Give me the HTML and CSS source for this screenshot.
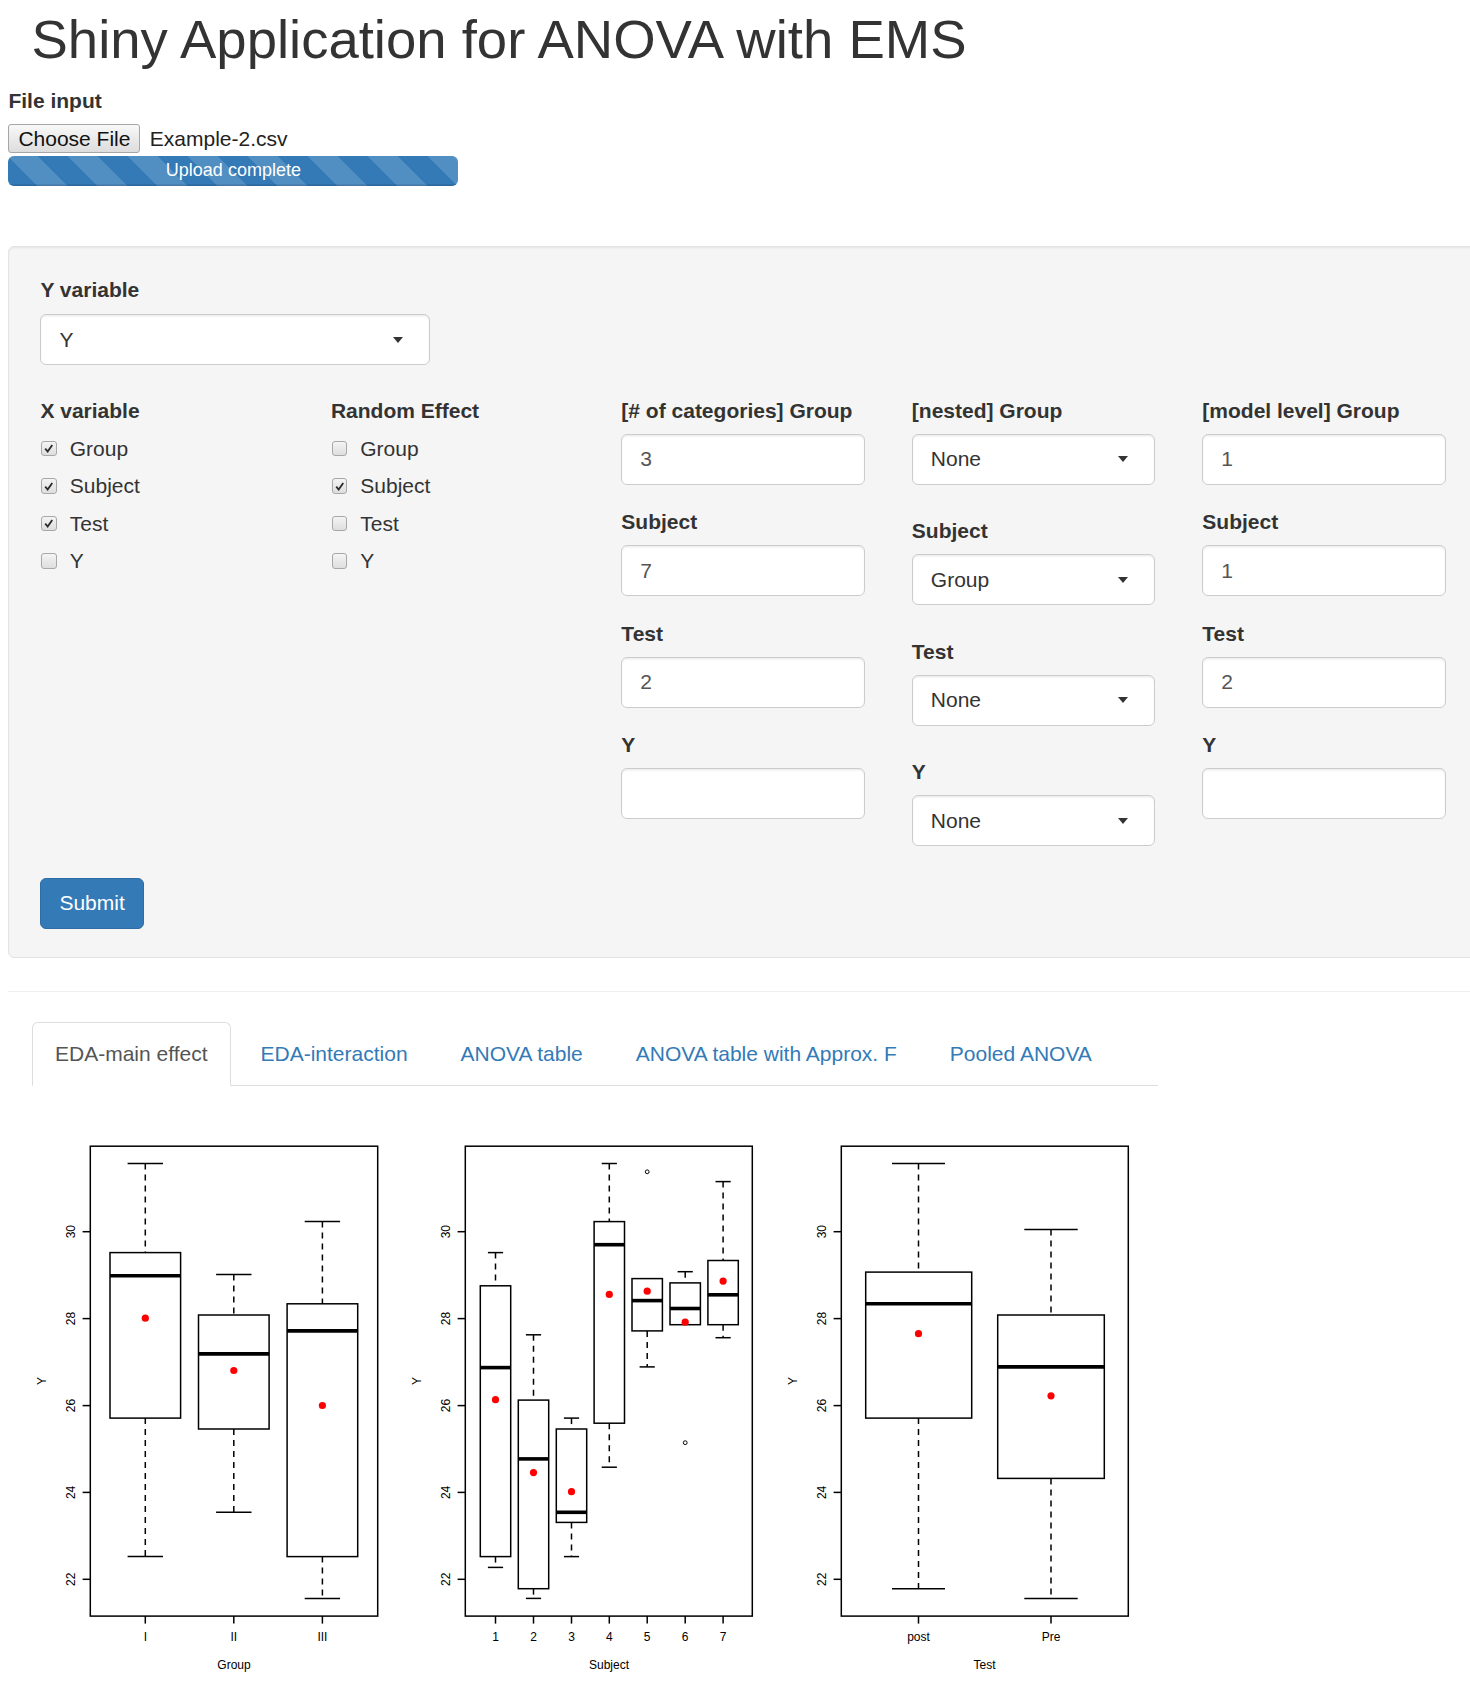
FILE: index.html
```html
<!DOCTYPE html>
<html lang="en">
<head>
<meta charset="utf-8">
<title>Shiny Application for ANOVA with EMS</title>
<link rel="stylesheet" href="styles.css">
</head>
<body>
<div class="page">
  <h1 class="title">Shiny Application for ANOVA with EMS</h1>

  <div class="file-group">
    <label class="ctl-label">File input</label>
    <div class="file-row">
      <span class="file-btn">Choose File</span>
      <span class="file-name">Example-2.csv</span>
    </div>
    <div class="progress"><div class="progress-bar">Upload complete</div></div>
  </div>

  <form class="well">
    <div class="form-group">
      <label class="ctl-label">Y variable</label>
      <div class="select wide"><span>Y</span><i class="caret"></i></div>
    </div>

    <div class="grid">
      <div class="col">
        <label class="ctl-label">X variable</label>
        <div class="cb-item"><span class="cb checked"><svg viewBox="0 0 15 15"><path d="M3.6 7.6 L6.3 10.9 L11.4 3.6"/></svg></span>Group</div>
        <div class="cb-item"><span class="cb checked"><svg viewBox="0 0 15 15"><path d="M3.6 7.6 L6.3 10.9 L11.4 3.6"/></svg></span>Subject</div>
        <div class="cb-item"><span class="cb checked"><svg viewBox="0 0 15 15"><path d="M3.6 7.6 L6.3 10.9 L11.4 3.6"/></svg></span>Test</div>
        <div class="cb-item"><span class="cb"></span>Y</div>
      </div>
      <div class="col">
        <label class="ctl-label">Random Effect</label>
        <div class="cb-item"><span class="cb"></span>Group</div>
        <div class="cb-item"><span class="cb checked"><svg viewBox="0 0 15 15"><path d="M3.6 7.6 L6.3 10.9 L11.4 3.6"/></svg></span>Subject</div>
        <div class="cb-item"><span class="cb"></span>Test</div>
        <div class="cb-item"><span class="cb"></span>Y</div>
      </div>
      <div class="col">
        <label class="ctl-label">[# of categories] Group</label>
        <div class="input">3</div>
        <label class="ctl-label">Subject</label>
        <div class="input">7</div>
        <label class="ctl-label">Test</label>
        <div class="input">2</div>
        <label class="ctl-label">Y</label>
        <div class="input"></div>
      </div>
      <div class="col">
        <label class="ctl-label">[nested] Group</label>
        <div class="select"><span>None</span><i class="caret"></i></div>
        <label class="ctl-label">Subject</label>
        <div class="select"><span>Group</span><i class="caret"></i></div>
        <label class="ctl-label">Test</label>
        <div class="select"><span>None</span><i class="caret"></i></div>
        <label class="ctl-label">Y</label>
        <div class="select"><span>None</span><i class="caret"></i></div>
      </div>
      <div class="col">
        <label class="ctl-label">[model level] Group</label>
        <div class="input">1</div>
        <label class="ctl-label">Subject</label>
        <div class="input">1</div>
        <label class="ctl-label">Test</label>
        <div class="input">2</div>
        <label class="ctl-label">Y</label>
        <div class="input"></div>
      </div>
      <div class="col"></div>
    </div>

    <button type="button" class="btn-submit">Submit</button>
  </form>

  <hr class="sep">

  <div class="main">
    <ul class="nav-tabs">
      <li class="active"><a>EDA-main effect</a></li>
      <li><a>EDA-interaction</a></li>
      <li><a>ANOVA table</a></li>
      <li><a>ANOVA table with Approx. F</a></li>
      <li><a>Pooled ANOVA</a></li>
    </ul>

    <div class="plots">
      <!-- Plot 1: Group -->
      <svg class="plot" width="375" height="590" viewBox="0 0 375 590">
        <rect class="frame" x="58.3" y="40.2" width="287.4" height="469.9"/>
        <g class="axis">
          <line x1="50.6" y1="125.7" x2="58.3" y2="125.7"/>
          <line x1="50.6" y1="212.6" x2="58.3" y2="212.6"/>
          <line x1="50.6" y1="299.6" x2="58.3" y2="299.6"/>
          <line x1="50.6" y1="386.4" x2="58.3" y2="386.4"/>
          <line x1="50.6" y1="473.3" x2="58.3" y2="473.3"/>
          <line x1="113.3" y1="510.1" x2="113.3" y2="517.6"/>
          <line x1="201.8" y1="510.1" x2="201.8" y2="517.6"/>
          <line x1="290.4" y1="510.1" x2="290.4" y2="517.6"/>
        </g>
        <g class="lbl">
          <text transform="translate(43,125.7) rotate(-90)">30</text>
          <text transform="translate(43,212.6) rotate(-90)">28</text>
          <text transform="translate(43,299.6) rotate(-90)">26</text>
          <text transform="translate(43,386.4) rotate(-90)">24</text>
          <text transform="translate(43,473.3) rotate(-90)">22</text>
          <text transform="translate(13.5,275) rotate(-90)">Y</text>
          <text x="113.3" y="535">I</text>
          <text x="201.8" y="535">II</text>
          <text x="290.4" y="535">III</text>
          <text x="202" y="563">Group</text>
        </g>
        <g class="box">
          <line class="wh" x1="113.3" y1="57.5" x2="113.3" y2="146.6"/>
          <line x1="95.6" y1="57.5" x2="131" y2="57.5"/>
          <rect x="78" y="146.6" width="70.6" height="165.5"/>
          <line class="med" x1="78" y1="169.7" x2="148.6" y2="169.7"/>
          <line class="wh" x1="113.3" y1="312.1" x2="113.3" y2="450.6"/>
          <line x1="95.6" y1="450.6" x2="131" y2="450.6"/>

          <line class="wh" x1="201.8" y1="168.6" x2="201.8" y2="209"/>
          <line x1="184.1" y1="168.6" x2="219.5" y2="168.6"/>
          <rect x="166.5" y="209" width="70.6" height="114"/>
          <line class="med" x1="166.5" y1="247.9" x2="237.1" y2="247.9"/>
          <line class="wh" x1="201.8" y1="323" x2="201.8" y2="406.3"/>
          <line x1="184.1" y1="406.3" x2="219.5" y2="406.3"/>

          <line class="wh" x1="290.4" y1="115.6" x2="290.4" y2="197.8"/>
          <line x1="272.7" y1="115.6" x2="308.1" y2="115.6"/>
          <rect x="255.1" y="197.8" width="70.6" height="252.8"/>
          <line class="med" x1="255.1" y1="224.9" x2="325.7" y2="224.9"/>
          <line class="wh" x1="290.4" y1="450.6" x2="290.4" y2="492.4"/>
          <line x1="272.7" y1="492.4" x2="308.1" y2="492.4"/>
        </g>
        <g class="mean">
          <circle cx="113.3" cy="212.2" r="3.6"/>
          <circle cx="201.8" cy="264.5" r="3.6"/>
          <circle cx="290.4" cy="299.5" r="3.6"/>
        </g>
      </svg>

      <!-- Plot 2: Subject -->
      <svg class="plot" width="375" height="590" viewBox="0 0 375 590">
        <rect class="frame" x="58.3" y="40.2" width="287" height="469.9"/>
        <g class="axis">
          <line x1="50.6" y1="125.7" x2="58.3" y2="125.7"/>
          <line x1="50.6" y1="212.6" x2="58.3" y2="212.6"/>
          <line x1="50.6" y1="299.6" x2="58.3" y2="299.6"/>
          <line x1="50.6" y1="386.4" x2="58.3" y2="386.4"/>
          <line x1="50.6" y1="473.3" x2="58.3" y2="473.3"/>
          <line x1="88.5" y1="510.1" x2="88.5" y2="517.6"/>
          <line x1="126.5" y1="510.1" x2="126.5" y2="517.6"/>
          <line x1="164.5" y1="510.1" x2="164.5" y2="517.6"/>
          <line x1="202.3" y1="510.1" x2="202.3" y2="517.6"/>
          <line x1="240.2" y1="510.1" x2="240.2" y2="517.6"/>
          <line x1="278.2" y1="510.1" x2="278.2" y2="517.6"/>
          <line x1="316.1" y1="510.1" x2="316.1" y2="517.6"/>
        </g>
        <g class="lbl">
          <text transform="translate(43,125.7) rotate(-90)">30</text>
          <text transform="translate(43,212.6) rotate(-90)">28</text>
          <text transform="translate(43,299.6) rotate(-90)">26</text>
          <text transform="translate(43,386.4) rotate(-90)">24</text>
          <text transform="translate(43,473.3) rotate(-90)">22</text>
          <text transform="translate(13.5,275) rotate(-90)">Y</text>
          <text x="88.5" y="535">1</text>
          <text x="126.5" y="535">2</text>
          <text x="164.5" y="535">3</text>
          <text x="202.3" y="535">4</text>
          <text x="240.2" y="535">5</text>
          <text x="278.2" y="535">6</text>
          <text x="316.1" y="535">7</text>
          <text x="202" y="563">Subject</text>
        </g>
        <g class="box">
          <line class="wh" x1="88.5" y1="146.6" x2="88.5" y2="179.8"/>
          <line x1="80.9" y1="146.6" x2="96.1" y2="146.6"/>
          <rect x="73.3" y="179.8" width="30.4" height="270.8"/>
          <line class="med" x1="73.3" y1="261.6" x2="103.7" y2="261.6"/>
          <line class="wh" x1="88.5" y1="450.6" x2="88.5" y2="461.4"/>
          <line x1="80.9" y1="461.4" x2="96.1" y2="461.4"/>

          <line class="wh" x1="126.5" y1="228.8" x2="126.5" y2="294.1"/>
          <line x1="118.9" y1="228.8" x2="134.1" y2="228.8"/>
          <rect x="111.3" y="294.1" width="30.4" height="188.6"/>
          <line class="med" x1="111.3" y1="352.9" x2="141.7" y2="352.9"/>
          <line class="wh" x1="126.5" y1="482.7" x2="126.5" y2="492.4"/>
          <line x1="118.9" y1="492.4" x2="134.1" y2="492.4"/>

          <line class="wh" x1="164.5" y1="312.1" x2="164.5" y2="323"/>
          <line x1="156.9" y1="312.1" x2="172.1" y2="312.1"/>
          <rect x="149.3" y="323" width="30.4" height="93.4"/>
          <line class="med" x1="149.3" y1="406.3" x2="179.7" y2="406.3"/>
          <line class="wh" x1="164.5" y1="416.4" x2="164.5" y2="450.6"/>
          <line x1="156.9" y1="450.6" x2="172.1" y2="450.6"/>

          <line class="wh" x1="202.3" y1="57.5" x2="202.3" y2="115.6"/>
          <line x1="194.7" y1="57.5" x2="209.9" y2="57.5"/>
          <rect x="187.1" y="115.6" width="30.4" height="201.6"/>
          <line class="med" x1="187.1" y1="138.7" x2="217.5" y2="138.7"/>
          <line class="wh" x1="202.3" y1="317.2" x2="202.3" y2="361.2"/>
          <line x1="194.7" y1="361.2" x2="209.9" y2="361.2"/>

          <rect x="225" y="172.6" width="30.4" height="52.3"/>
          <line class="med" x1="225" y1="194.6" x2="255.4" y2="194.6"/>
          <line class="wh" x1="240.2" y1="224.9" x2="240.2" y2="260.9"/>
          <line x1="232.6" y1="260.9" x2="247.8" y2="260.9"/>
          <circle class="out" cx="240.2" cy="65.8" r="1.9"/>

          <line class="wh" x1="278.2" y1="165.7" x2="278.2" y2="176.9"/>
          <line x1="270.6" y1="165.7" x2="285.8" y2="165.7"/>
          <rect x="263" y="176.9" width="30.4" height="41.8"/>
          <line class="med" x1="263" y1="202.5" x2="293.4" y2="202.5"/>
          <circle class="out" cx="278.2" cy="336.7" r="1.9"/>

          <line class="wh" x1="316.1" y1="75.6" x2="316.1" y2="154.5"/>
          <line x1="308.5" y1="75.6" x2="323.7" y2="75.6"/>
          <rect x="300.9" y="154.5" width="30.4" height="64.2"/>
          <line class="med" x1="300.9" y1="188.8" x2="331.3" y2="188.8"/>
          <line class="wh" x1="316.1" y1="218.7" x2="316.1" y2="231.7"/>
          <line x1="308.5" y1="231.7" x2="323.7" y2="231.7"/>
        </g>
        <g class="mean">
          <circle cx="88.5" cy="293.7" r="3.6"/>
          <circle cx="126.5" cy="366.6" r="3.6"/>
          <circle cx="164.5" cy="385.7" r="3.6"/>
          <circle cx="202.3" cy="188.4" r="3.6"/>
          <circle cx="240.2" cy="185.2" r="3.6"/>
          <circle cx="278.2" cy="216.2" r="3.6"/>
          <circle cx="316.1" cy="175.1" r="3.6"/>
        </g>
      </svg>

      <!-- Plot 3: Test -->
      <svg class="plot" width="375" height="590" viewBox="0 0 375 590">
        <rect class="frame" x="59.3" y="40.2" width="287" height="469.9"/>
        <g class="axis">
          <line x1="51.6" y1="125.7" x2="59.3" y2="125.7"/>
          <line x1="51.6" y1="212.6" x2="59.3" y2="212.6"/>
          <line x1="51.6" y1="299.6" x2="59.3" y2="299.6"/>
          <line x1="51.6" y1="386.4" x2="59.3" y2="386.4"/>
          <line x1="51.6" y1="473.3" x2="59.3" y2="473.3"/>
          <line x1="136.5" y1="510.1" x2="136.5" y2="517.6"/>
          <line x1="269" y1="510.1" x2="269" y2="517.6"/>
        </g>
        <g class="lbl">
          <text transform="translate(44,125.7) rotate(-90)">30</text>
          <text transform="translate(44,212.6) rotate(-90)">28</text>
          <text transform="translate(44,299.6) rotate(-90)">26</text>
          <text transform="translate(44,386.4) rotate(-90)">24</text>
          <text transform="translate(44,473.3) rotate(-90)">22</text>
          <text transform="translate(14.5,275) rotate(-90)">Y</text>
          <text x="136.5" y="535">post</text>
          <text x="269" y="535">Pre</text>
          <text x="202.5" y="563">Test</text>
        </g>
        <g class="box">
          <line class="wh" x1="136.5" y1="57.5" x2="136.5" y2="166.1"/>
          <line x1="110" y1="57.5" x2="163" y2="57.5"/>
          <rect x="83.7" y="166.1" width="106" height="146"/>
          <line class="med" x1="83.7" y1="197.8" x2="189.7" y2="197.8"/>
          <line class="wh" x1="136.5" y1="312.1" x2="136.5" y2="482.7"/>
          <line x1="110" y1="482.7" x2="163" y2="482.7"/>

          <line class="wh" x1="269" y1="123.5" x2="269" y2="209"/>
          <line x1="242.3" y1="123.5" x2="295.7" y2="123.5"/>
          <rect x="215.7" y="209" width="106.6" height="163.4"/>
          <line class="med" x1="215.7" y1="260.9" x2="322.3" y2="260.9"/>
          <line class="wh" x1="269" y1="372.4" x2="269" y2="492.4"/>
          <line x1="242.3" y1="492.4" x2="295.7" y2="492.4"/>
        </g>
        <g class="mean">
          <circle cx="136.5" cy="227.7" r="3.6"/>
          <circle cx="269" cy="289.8" r="3.6"/>
        </g>
      </svg>
    </div>
  </div>
</div>
</body>
</html>
```

FILE: styles.css
```css
* {
  box-sizing: border-box;
}

html,
body {
  margin: 0;
  padding: 0;
}

body {
  font-family: "Liberation Sans", Arial, Helvetica, sans-serif;
  font-size: 21px;
  line-height: 30px;
  color: #333;
  background: #fff;
}

.page {
  width: 100%;
  overflow: hidden;
}

.title {
  font-size: 54.5px;
  font-weight: 400;
  line-height: 59.4px;
  margin: 10px 0 0 31.5px;
  color: #333;
  white-space: nowrap;
}

.ctl-label {
  display: block;
  font-weight: 700;
  margin-bottom: 8px;
  white-space: nowrap;
}

/* file input */
.file-group {
  margin: 16.5px 0 0 8.4px;
  width: 450px;
}

.file-group .ctl-label {
  margin-bottom: 8px;
}

.file-row {
  display: flex;
  align-items: center;
  gap: 9.4px;
  height: 29.5px;
}

.file-btn {
  display: flex;
  align-items: center;
  height: 29.5px;
  padding: 0 9px;
  border: 1.5px solid #a6a6a6;
  border-radius: 3px;
  background: linear-gradient(#f8f8f8, #dddddd);
  color: #111;
  line-height: 26px;
}

.file-name {
  color: #222;
}

.progress {
  margin-top: 2.7px;
  height: 29.5px;
  border-radius: 6px;
  overflow: hidden;
  background: #f5f5f5;
}

.progress-bar {
  width: 100%;
  height: 100%;
  background-color: #337ab7;
  background-image: linear-gradient(45deg,
      rgba(255, 255, 255, .15) 25%, transparent 25%,
      transparent 50%, rgba(255, 255, 255, .15) 50%,
      rgba(255, 255, 255, .15) 75%, transparent 75%, transparent);
  background-size: 60px 60px;
  color: #fff;
  font-size: 18px;
  line-height: 29.5px;
  text-align: center;
  box-shadow: inset 0 -1.5px 0 rgba(0, 0, 0, .15);
}

/* well */
.well {
  margin: 60px 0 0 8.4px;
  width: 1760px;
  padding: 28.5px 29.5px 28.5px 31px;
  background: #f5f5f5;
  border: 1.5px solid #e3e3e3;
  border-radius: 6px;
  box-shadow: inset 0 1.5px 1.5px rgba(0, 0, 0, .05);
}

.form-group .ctl-label {
  margin-bottom: 9px;
}

.form-group .select.wide {
  width: 390px;
}

.select {
  display: flex;
  align-items: center;
  justify-content: space-between;
  height: 51px;
  padding: 0 26px 0 18px;
  background: #fff;
  border: 1.5px solid #ccc;
  border-radius: 6px;
  box-shadow: inset 0 1.5px 1.5px rgba(0, 0, 0, .075);
  color: #333;
  margin-bottom: 31.5px;
}

.form-group .select {
  margin-bottom: 30.5px;
}

.caret {
  display: block;
  width: 0;
  height: 0;
  border-style: solid;
  border-width: 6px 5.5px 0 5.5px;
  border-color: #333 transparent transparent transparent;
}

.grid {
  display: grid;
  grid-template-columns: repeat(6, 243.2px);
  column-gap: 47.3px;
  align-items: start;
}

.cb-item {
  display: flex;
  align-items: center;
  height: 30px;
  margin-bottom: 7.5px;
  white-space: nowrap;
}

.cb {
  display: flex;
  align-items: center;
  justify-content: center;
  width: 15.5px;
  height: 15.5px;
  margin: 0 13.1px 0 0.8px;
  border: 1px solid #a8a8a8;
  border-radius: 3px;
  background: linear-gradient(#f4f4f4, #dedede);
  flex: none;
}

.cb svg {
  width: 15px;
  height: 15px;
}

.cb svg path {
  fill: none;
  stroke: #2a2a2a;
  stroke-width: 2;
}

.input {
  display: flex;
  align-items: center;
  height: 51px;
  padding: 0 18px;
  background: #fff;
  border: 1.5px solid #ccc;
  border-radius: 6px;
  box-shadow: inset 0 1.5px 1.5px rgba(0, 0, 0, .075);
  color: #555;
  margin-bottom: 22.5px;
}

.btn-submit {
  display: block;
  height: 51px;
  padding: 0 18px;
  font-family: inherit;
  font-size: 21px;
  line-height: 30px;
  color: #fff;
  background: #337ab7;
  border: 1.5px solid #2e6da4;
  border-radius: 6px;
}

.sep {
  margin: 33px 0 30px 8.4px;
  width: 1760px;
  height: 0;
  border: 0;
  border-top: 1.5px solid #eee;
}

/* tabs */
.main {
  margin-left: 31.5px;
  width: 1126.7px;
}

.nav-tabs {
  display: flex;
  list-style: none;
  margin: 0;
  padding: 0;
  border-bottom: 1.5px solid #ddd;
}

.nav-tabs li {
  margin: 0 6px -1.5px 0;
}

.nav-tabs a {
  display: block;
  padding: 16px 22.5px;
  line-height: 30px;
  border: 1.5px solid transparent;
  border-radius: 6px 6px 0 0;
  color: #337ab7;
  white-space: nowrap;
}

.nav-tabs li.active a {
  color: #555;
  background: #fff;
  border-color: #ddd #ddd transparent #ddd;
}

/* plots */
.plots {
  display: flex;
  margin-top: 20.8px;
}

.plot {
  display: block;
  flex: none;
}

.plot .frame,
.plot .box rect {
  fill: #fff;
  stroke: #000;
  stroke-width: 1.5;
}

.plot .frame {
  fill: none;
}

.plot .axis line,
.plot .box line {
  stroke: #000;
  stroke-width: 1.5;
}

.plot .box line.wh {
  stroke-dasharray: 6 5;
}

.plot .box line.med {
  stroke-width: 3.6;
}

.plot .lbl text {
  font-family: "Liberation Sans", Arial, sans-serif;
  font-size: 12px;
  fill: #000;
  text-anchor: middle;
}

.plot .mean circle {
  fill: #ff0000;
}

.plot .box circle.out {
  fill: none;
  stroke: #000;
  stroke-width: 1;
}
```
